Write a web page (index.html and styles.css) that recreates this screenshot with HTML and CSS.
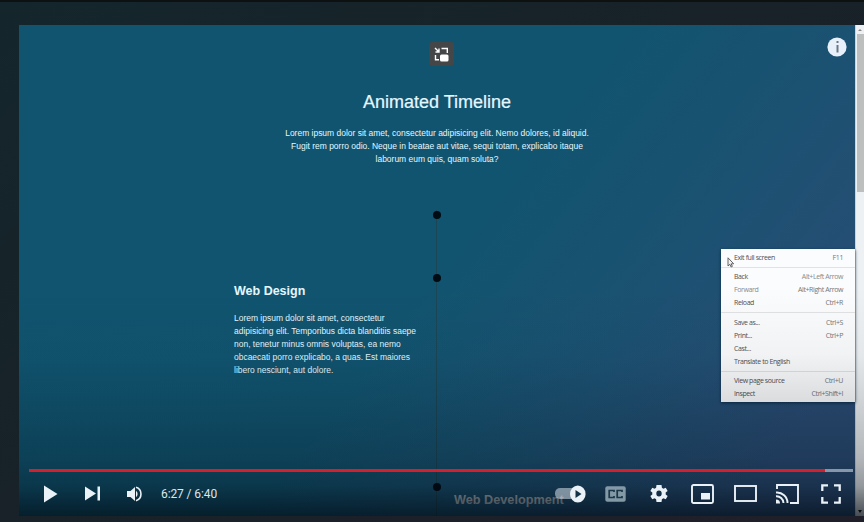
FILE: index.html
```html
<!DOCTYPE html>
<html lang="en">
<head>
<meta charset="utf-8">
<title>Animated Timeline</title>
<link rel="stylesheet" href="styles.css">
</head>
<body>
<main class="player">
  <section class="page">
    <header class="intro">
      <h1>Animated Timeline</h1>
      <p>Lorem ipsum dolor sit amet, consectetur adipisicing elit. Nemo dolores, id aliquid.<br>Fugit rem porro odio. Neque in beatae aut vitae, sequi totam, explicabo itaque<br>laborum eum quis, quam soluta?</p>
    </header>
    <div class="timeline">
      <article class="design">
        <h2>Web Design</h2>
        <p>Lorem ipsum dolor sit amet, consectetur<br>adipisicing elit. Temporibus dicta blanditiis saepe<br>non, tenetur minus omnis voluptas, ea nemo<br>obcaecati porro explicabo, a quas. Est maiores<br>libero nesciunt, aut dolore.</p>
      </article>
      <div class="line"><i class="dot d1"></i><i class="dot d2"></i><i class="dot d3"></i></div>
      <article class="development"><h2>Web Development</h2></article>
    </div>
  </section>
  <div class="scrollbar"><span class="up"></span><div class="thumb"></div><span class="down"></span></div>

  <div class="pip">
    <svg width="15" height="15" viewBox="0 0 15 15" fill="none" stroke="#fff" stroke-width="1.4"><path d="M1 1l4 4M1.500 5H5V1.500M7.500 1.500H13.300V6M1.500 8V12.800H5"/><rect x="6" y="7.500" width="8.500" height="7" rx="1.500" fill="#fff" stroke="none"/></svg>
  </div>
  <div class="info"><svg width="20" height="20" viewBox="0 0 20 20"><circle cx="10" cy="10" r="9.600" fill="#e8f0fa"/><path d="M9.500 4h2v2h-2zM9.500 8h2v7.500h-2z" fill="#6b7883"/></svg></div>

  <nav class="menu">
    <ul>
      <li class="first"><span>Exit full screen</span><span>F11</span></li>
    </ul>
    <ul>
      <li><span>Back</span><span class="soft">Alt+Left Arrow</span></li>
      <li class="soft"><span>Forward</span><span>Alt+Right Arrow</span></li>
      <li><span>Reload</span><span>Ctrl+R</span></li>
    </ul>
    <ul>
      <li><span>Save as...</span><span>Ctrl+S</span></li>
      <li><span>Print...</span><span>Ctrl+P</span></li>
      <li><span>Cast...</span></li>
      <li><span>Translate to English</span></li>
    </ul>
    <ul>
      <li><span>View page source</span><span>Ctrl+U</span></li>
      <li><span>Inspect</span><span>Ctrl+Shift+I</span></li>
    </ul>
    <svg class="cursor" width="8" height="11" viewBox="0 0 8 11"><path d="M1 .8V9l1.900-1.700 1.200 2.700 1.300-.6-1.200-2.600h2.500z" fill="#f4f4f4" stroke="#555" stroke-width=".9"/></svg>
  </nav>

  <div class="shade"></div>
  <footer class="controls">
    <div class="progress"><div class="played"></div></div>
    <div class="buttons">
      <div class="group left">
        <svg width="14" height="18" viewBox="0 0 14 18"><path d="M0 .5L13.500 9 0 17.500z"/></svg>
        <svg class="next" width="16" height="15" viewBox="0 0 16 15"><path d="M0 .5L11 7.500 0 14.500zM12.500.5H15v14h-2.500z"/></svg>
        <svg class="volume" width="16" height="16" viewBox="0 0 16 16"><path d="M0 5h3.500L8 1v14l-4.500-4H0z"/><path d="M9 4.800a4 4 0 0 1 0 6.400z"/><path d="M9 1.300a7 7 0 0 1 0 13.400" fill="none" stroke="#eaf2f7" stroke-width="1.600"/></svg>
        <span class="time">6:27 / 6:40</span>
      </div>
      <div class="group right">
        <svg width="31" height="18" viewBox="0 0 31 18"><rect x="0" y="3" width="27" height="11" rx="5" opacity=".5"/><ellipse cx="22.800" cy="9" rx="7.800" ry="8.600"/><path d="M20.500 5l6 4-6 4z" fill="#143246"/></svg>
        <svg class="cc" width="21" height="16" viewBox="0 0 21 16"><rect x=".3" y=".3" width="20.400" height="15.400" rx="2" fill="#8399a6"/><path d="M9 6V4.500H4.200v7H9V10M17 6V4.500h-4.800v7H17V10" fill="none" stroke="#1b3749" stroke-width="1.700"/></svg>
        <svg class="gear" width="18" height="19" viewBox="2 1.500 20 21"><path fill-rule="evenodd" d="M19.400 13c.1-.7.1-1.300 0-2l2.200-1.700-2.100-3.700-2.600 1.100-1.700-1L14.800 2.500H9.200l-.4 3.200-1.700 1-2.600-1.100-2.100 3.700L4.600 11c-.1.700-.1 1.300 0 2l-2.200 1.700 2.100 3.700 2.600-1.100 1.700 1 .4 3.200h5.600l.4-3.200 1.700-1 2.600 1.100 2.100-3.700zM12 8.600a3 3.400 0 1 0 0 6.800 3 3.400 0 0 0 0-6.800z"/></svg>
        <svg class="mini" width="23" height="20" viewBox="0 0 23 20"><rect x="1" y="1" width="21" height="18" rx="1.500" fill="none" stroke="#eaf2f7" stroke-width="1.900"/><path d="M10 9h9v6.500h-9z"/></svg>
        <svg class="theater" width="23" height="17" viewBox="0 0 23 17"><rect x="1" y="1" width="21" height="15" fill="none" stroke="#eaf2f7" stroke-width="1.900"/></svg>
        <svg class="cast" width="24" height="20" viewBox="0 0 24 20"><path d="M2 5V1h21v18h-8M1 8.500A10.500 10.500 0 0 1 12.500 19M1 12.300A7 7 0 0 1 8.500 19" fill="none" stroke="#eaf2f7" stroke-width="1.900"/><path d="M1 15.500A4 4 0 0 1 5 19.500H1z"/></svg>
        <svg class="full" width="20" height="20" viewBox="0 0 20 20"><path d="M1.300 7V1.300H7M13 1.300h5.700V7M18.700 13v5.700H13M7 18.700H1.300V13" fill="none" stroke="#eaf2f7" stroke-width="2.300"/></svg>
      </div>
    </div>
  </footer>
</main>
</body>
</html>
```
FILE: styles.css
```css
* { box-sizing: border-box; }
body {
  margin: 0;
  width: 864px;
  height: 522px;
  padding: 23px 0 6px 19px;
  overflow: hidden;
  border-top: 2px solid #0e1112;
  background: linear-gradient(145deg, #14262c 0%, #182228 45%, #201f29 100%);
  font-family: "Liberation Sans", Arial, sans-serif;
}
.player {
  position: relative;
  height: 491px;
  display: grid;
  grid-template-columns: 836px 9px;
}
.page {
  overflow: hidden;
  background: linear-gradient(128deg, #10546f 0%, #11546f 50%, #1c5172 70%, #2a4c74 90%);
  color: #e4f7ff;
}
.intro { height: 185px; padding-top: 65px; text-align: center; }
h1 { margin: 0; font-size: 18px; line-height: 24px; font-weight: 400; -webkit-text-stroke: .2px; }
p { margin: 0; font-size: 8.470px; line-height: 13px; white-space: nowrap; }
.intro p { margin-top: 13px; }
.timeline {
  height: 306px;
  display: grid;
  grid-template-columns: 417px 2px 417px;
}
.design { padding: 72px 0 0 215px; }
h2 { margin: 0; font-size: 12.500px; line-height: 18px; white-space: nowrap; }
.design p { margin-top: 12px; }
.line { background: linear-gradient(90deg, #1b4656 50%, transparent 50%); display: flex; flex-direction: column; align-items: center; }
.dot { flex: none; width: 8px; height: 8px; border-radius: 50%; background: #000b14; }
.d1 { margin-top: 1px; }
.d2 { margin-top: 55px; }
.d3 { margin-top: 201px; }
.development { padding: 281px 0 0 16px; color: #b9c1c8; }
.development h2 { font-size: 12.700px; }

.scrollbar { background: #eef1f3; border-left: 1px solid #c9d5dd; display: flex; flex-direction: column; align-items: center; }
.up { margin: 4px 0 3px; border: 2px solid transparent; border-top: 0; border-bottom: 2px solid #888; }
.thumb { width: 7px; height: 158px; background: #bdbebe; }
.down { margin: auto 0 3px; border: 2px solid transparent; border-bottom: 0; border-top: 3px solid #111; }

.pip {
  position: absolute; left: 410px; top: 17px; width: 25px; height: 24px;
  display: flex; align-items: center; justify-content: center;
  background: #444648; border-radius: 3px;
}
.info { position: absolute; left: 808px; top: 12px; }
.info svg { display: block; }

.menu {
  position: absolute; left: 702px; top: 224px; width: 134px; height: 153px;
  background: #fbfcfd;
  box-shadow: 0 1px 3px #0b2b42;
  color: #4f5255;
  font: 7px/13px "Open Sans", sans-serif;
  letter-spacing: -.4px;
}
.menu ul { list-style: none; margin: 0; padding: 3px 12px 3px 13px; border-bottom: 1px solid #e0e2e4; }
.menu ul:first-of-type { padding-top: 2px; }
.menu ul:nth-of-type(2) { padding-top: 2px; }
.menu ul:last-of-type { border: 0; padding-top: 2px; }
.menu li { display: flex; justify-content: space-between; height: 13px; white-space: nowrap; }
.menu li span + span { color: #74777a; }
.menu .soft { color: #888b8e; }
.cursor { position: absolute; left: 6px; top: 8px; }

.shade {
  position: absolute; left: 0; right: 0; bottom: 0; height: 230px;
  background: linear-gradient(transparent 0%, rgba(0,8,16,.04) 30%, rgba(0,8,16,.13) 50%, rgba(0,8,16,.25) 75%, rgba(0,8,16,.38) 87%, rgba(0,8,16,.7) 100%);
}
.controls { position: absolute; left: 10px; right: 11px; bottom: 0; height: 47px; }
.progress { height: 3px; background: #8796a9; }
.played { width: 796px; height: 3px; background: #d3202c; }
.buttons { height: 43px; display: flex; justify-content: space-between; padding-left: 15px; padding-right: 12px; }
.group { display: flex; align-items: center; fill: #eaf2f7; }
.group svg { flex: none; display: block; }
.next { margin-left: 27px; }
.volume { margin-left: 26px; }
.time { margin-left: 18px; font: 12px/20px Roboto, sans-serif; letter-spacing: -.1px; color: #dce6ec; white-space: nowrap; }
.cc { margin-left: 19px; }
.gear { margin-left: 24px; }
.mini { margin-left: 23px; }
.theater { margin-left: 20px; }
.cast { margin-left: 18px; }
.full { margin-left: 22px; }
```
